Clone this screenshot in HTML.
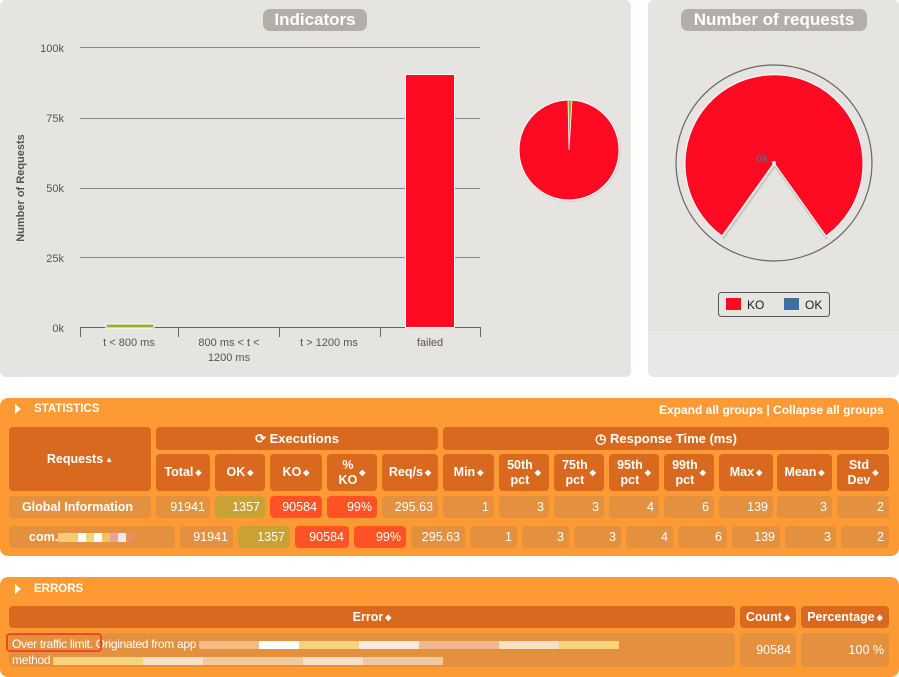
<!DOCTYPE html>
<html><head><meta charset="utf-8"><style>
*{box-sizing:border-box;margin:0;padding:0}
body{width:899px;height:672px;background:#fff;font-family:"Liberation Sans",Arial,sans-serif;position:relative;overflow:hidden}
.a{position:absolute}
.pill{position:absolute;background:#b1afa8;color:#fff;font-weight:bold;font-size:17px;text-align:center;border-radius:7px;line-height:22px}
.c{position:absolute;border-radius:4px;color:#fff;font-weight:bold;font-size:12.5px;display:flex;align-items:center;justify-content:center;text-align:center;line-height:15px}
.h{background:#d8691e}
.d{background:#e3903f;justify-content:flex-end;padding-right:5px;font-weight:normal;font-size:12.5px}
.ok{background:#c9a135}
.ko{background:#ff5326}
.s{font-size:8px;margin-left:2px}
.px{display:inline-block;width:8px;height:9px;vertical-align:middle}
</style></head><body>
<div class="a" style="left:0;top:0;width:631px;height:377px;background:#e5e4e0;border-radius:6px"></div>
<div class="pill" style="left:263px;top:9px;width:104px">Indicators</div>
<svg class="a" style="left:0;top:0" width="640" height="377">
<g stroke="#888" stroke-width="1">
<line x1="80" y1="47.5" x2="480" y2="47.5"/><line x1="80" y1="118.5" x2="480" y2="118.5"/><line x1="80" y1="188.5" x2="480" y2="188.5"/><line x1="80" y1="257.5" x2="480" y2="257.5"/>
<line x1="80" y1="327.5" x2="480" y2="327.5" stroke="#666"/>
<g stroke="#666"><line x1="80.5" y1="327" x2="80.5" y2="337"/><line x1="178.5" y1="327" x2="178.5" y2="337"/><line x1="279.5" y1="327" x2="279.5" y2="337"/><line x1="380.5" y1="327" x2="380.5" y2="337"/><line x1="480.5" y1="327" x2="480.5" y2="337"/></g>
</g>
<g font-family="Liberation Sans,sans-serif" font-size="11" fill="#555" text-anchor="end">
<text x="64" y="52">100k</text><text x="64" y="122">75k</text><text x="64" y="192">50k</text><text x="64" y="262">25k</text><text x="64" y="332">0k</text></g>
<text transform="translate(24,188) rotate(-90)" text-anchor="middle" font-size="11" font-weight="bold" fill="#555" font-family="Liberation Sans,sans-serif">Number of Requests</text>
<g font-family="Liberation Sans,sans-serif" font-size="11" fill="#555" text-anchor="middle">
<text x="129" y="346">t &lt; 800 ms</text><text x="229" y="346">800 ms &lt; t &lt;</text><text x="229" y="361">1200 ms</text><text x="329" y="346">t &gt; 1200 ms</text><text x="430" y="346">failed</text></g>
<rect x="106" y="324" width="48" height="4" fill="#9aad2f" stroke="#fff" stroke-width="1"/>
<rect x="405.5" y="74.5" width="49" height="253" fill="#ff0a22" stroke="#fff" stroke-width="1"/>
<circle cx="570" cy="151" r="51" fill="#d8d7d2"/>
<circle cx="569" cy="150" r="50" fill="#ff0a22" stroke="#fff" stroke-width="1"/>
<path d="M569 150 L568 100 L572 100 Z" fill="#9aad2f" stroke="#fff" stroke-width="0.8"/>
</svg>
<div class="a" style="left:648px;top:0;width:251px;height:377px;background:#e8e8e8;border-radius:6px"></div>
<div class="a" style="left:648px;top:0;width:251px;height:331px;background:#e5e4e0;border-radius:6px 6px 0 0"></div>
<div class="pill" style="left:681px;top:9px;width:186px">Number of requests</div>
<svg class="a" style="left:648px;top:0" width="251" height="331">
<circle cx="126" cy="163" r="98" fill="none" stroke="#666" stroke-width="1.2"/>
<path d="M127 166 L75 239 M127 166 L179 239" stroke="#c8c7c2" stroke-width="2" fill="none"/>
<path d="M126 163 L74 236 A89 89 0 1 1 178 236 Z" fill="#ff0a22" stroke="#fff" stroke-width="1"/>
<text x="108" y="162" font-size="11" font-weight="bold" fill="#666" font-family="Liberation Sans,sans-serif">0k</text>
<circle cx="126" cy="163" r="2" fill="#eee"/>
<rect x="70.5" y="292.5" width="111" height="24" rx="3" fill="none" stroke="#555"/>
<rect x="78" y="298" width="15" height="12" fill="#ff0a22"/><text x="99" y="309" font-size="12" fill="#222" font-family="Liberation Sans,sans-serif">KO</text>
<rect x="136" y="298" width="15" height="12" fill="#3d6fa0"/><text x="157" y="309" font-size="12" fill="#222" font-family="Liberation Sans,sans-serif">OK</text>
</svg>
<div class="a" style="left:0;top:398px;width:899px;height:158px;background:#fe9a33;border-radius:8px"></div>
<div class="a" style="left:15px;top:404px;width:0;height:0;border-top:5px solid transparent;border-bottom:5px solid transparent;border-left:6px solid #fff"></div>
<div class="a" style="left:34px;top:403px;color:#fff;font-weight:bold;font-size:11.5px">STATISTICS</div>
<div class="a" style="left:659px;top:403px;color:#fff;font-weight:bold;font-size:12px">Expand all groups | Collapse all groups</div>
<div class="c h" style="left:9px;top:427px;width:142px;height:64px">Requests<span class="s">▲</span></div>
<div class="c h" style="left:156px;top:427px;width:282px;height:23px;font-size:13px">⟳&nbsp;Executions</div>
<div class="c h" style="left:443px;top:427px;width:446px;height:23px;font-size:13px">◷&nbsp;Response Time (ms)</div>
<div class="c h" style="left:156px;top:454px;width:54px;height:37px">Total<span class="s">◆</span></div>
<div class="c h" style="left:215px;top:454px;width:50px;height:37px">OK<span class="s">◆</span></div>
<div class="c h" style="left:270px;top:454px;width:52px;height:37px">KO<span class="s">◆</span></div>
<div class="c h" style="left:327px;top:454px;width:50px;height:37px">%<br>KO<span class="s">◆</span></div>
<div class="c h" style="left:382px;top:454px;width:56px;height:37px">Req/s<span class="s">◆</span></div>
<div class="c h" style="left:443px;top:454px;width:51px;height:37px">Min<span class="s">◆</span></div>
<div class="c h" style="left:499px;top:454px;width:50px;height:37px">50th<br>pct<span class="s">◆</span></div>
<div class="c h" style="left:554px;top:454px;width:50px;height:37px">75th<br>pct<span class="s">◆</span></div>
<div class="c h" style="left:609px;top:454px;width:50px;height:37px">95th<br>pct<span class="s">◆</span></div>
<div class="c h" style="left:664px;top:454px;width:50px;height:37px">99th<br>pct<span class="s">◆</span></div>
<div class="c h" style="left:719px;top:454px;width:54px;height:37px">Max<span class="s">◆</span></div>
<div class="c h" style="left:777px;top:454px;width:55px;height:37px">Mean<span class="s">◆</span></div>
<div class="c h" style="left:837px;top:454px;width:52px;height:37px">Std<br>Dev<span class="s">◆</span></div>
<div class="c d" style="left:9px;top:496px;width:142px;height:22px;justify-content:center;font-weight:bold">Global Information</div>
<div class="c d" style="left:156px;top:496px;width:54px;height:22px">91941</div>
<div class="c d ok" style="left:215px;top:496px;width:50px;height:22px">1357</div>
<div class="c d ko" style="left:270px;top:496px;width:52px;height:22px">90584</div>
<div class="c d ko" style="left:327px;top:496px;width:50px;height:22px">99%</div>
<div class="c d" style="left:382px;top:496px;width:56px;height:22px">295.63</div>
<div class="c d" style="left:443px;top:496px;width:51px;height:22px">1</div>
<div class="c d" style="left:499px;top:496px;width:50px;height:22px">3</div>
<div class="c d" style="left:554px;top:496px;width:50px;height:22px">3</div>
<div class="c d" style="left:609px;top:496px;width:50px;height:22px">4</div>
<div class="c d" style="left:664px;top:496px;width:50px;height:22px">6</div>
<div class="c d" style="left:719px;top:496px;width:54px;height:22px">139</div>
<div class="c d" style="left:777px;top:496px;width:55px;height:22px">3</div>
<div class="c d" style="left:837px;top:496px;width:52px;height:22px">2</div>
<div class="c d" style="left:9px;top:526px;width:166px;height:22px;justify-content:flex-start;padding-left:20px;font-weight:bold">com.<span class="px" style="background:#f9c97a;width:20px"></span><span class="px" style="background:#fff"></span><span class="px" style="background:#f9d27c"></span><span class="px" style="background:#fff"></span><span class="px" style="background:#f8c060"></span><span class="px" style="background:#e9a0a0"></span><span class="px" style="background:#f3e6ee"></span><span class="px" style="background:#e69060"></span></div>
<div class="c d" style="left:180px;top:526px;width:53px;height:22px">91941</div>
<div class="c d ok" style="left:238px;top:526px;width:52px;height:22px">1357</div>
<div class="c d ko" style="left:295px;top:526px;width:54px;height:22px">90584</div>
<div class="c d ko" style="left:354px;top:526px;width:52px;height:22px">99%</div>
<div class="c d" style="left:411px;top:526px;width:54px;height:22px">295.63</div>
<div class="c d" style="left:470px;top:526px;width:47px;height:22px">1</div>
<div class="c d" style="left:522px;top:526px;width:47px;height:22px">3</div>
<div class="c d" style="left:574px;top:526px;width:47px;height:22px">3</div>
<div class="c d" style="left:626px;top:526px;width:47px;height:22px">4</div>
<div class="c d" style="left:678px;top:526px;width:49px;height:22px">6</div>
<div class="c d" style="left:732px;top:526px;width:48px;height:22px">139</div>
<div class="c d" style="left:785px;top:526px;width:51px;height:22px">3</div>
<div class="c d" style="left:841px;top:526px;width:48px;height:22px">2</div>
<div class="a" style="left:0;top:577px;width:899px;height:100px;background:#fe9a33;border-radius:8px"></div>
<div class="a" style="left:15px;top:584px;width:0;height:0;border-top:5px solid transparent;border-bottom:5px solid transparent;border-left:6px solid #fff"></div>
<div class="a" style="left:34px;top:583px;color:#fff;font-weight:bold;font-size:11.5px">ERRORS</div>
<div class="c h" style="left:9px;top:606px;width:726px;height:22px">Error<span class="s">◆</span></div>
<div class="c h" style="left:740px;top:606px;width:56px;height:22px">Count<span class="s">◆</span></div>
<div class="c h" style="left:801px;top:606px;width:88px;height:22px">Percentage<span class="s">◆</span></div>
<div class="a" style="left:9px;top:633px;width:726px;height:34px;background:#e3903f;border-radius:4px"></div>
<div class="a" style="left:12px;top:636px;color:#fff;font-size:12px;line-height:16px;letter-spacing:-0.3px;white-space:nowrap">Over traffic limit. Originated from app <span class="px" style="background:#f4c89a;width:60px;height:8px;opacity:.8"></span><span class="px" style="background:#fff;width:40px;height:8px"></span><span class="px" style="background:#f8d27c;width:60px;height:8px"></span><span class="px" style="background:#fff;width:60px;height:8px;opacity:.8"></span><span class="px" style="background:#f0b890;width:80px;height:8px"></span><span class="px" style="background:#fff;width:60px;height:8px;opacity:.7"></span><span class="px" style="background:#f8d27c;width:60px;height:8px"></span><br>method <span class="px" style="background:#f8d27c;width:90px;height:8px"></span><span class="px" style="background:#fff;width:60px;height:8px;opacity:.7"></span><span class="px" style="background:#f4c89a;width:100px;height:8px"></span><span class="px" style="background:#fff;width:60px;height:8px;opacity:.7"></span><span class="px" style="background:#f0c8a0;width:80px;height:8px"></span></div>
<div class="a" style="left:6px;top:633px;width:96px;height:19px;border:2px solid #f2452a;border-radius:4px"></div>
<div class="c d" style="left:740px;top:633px;width:56px;height:34px">90584</div>
<div class="c d" style="left:801px;top:633px;width:88px;height:34px">100 %</div>
</body></html>
